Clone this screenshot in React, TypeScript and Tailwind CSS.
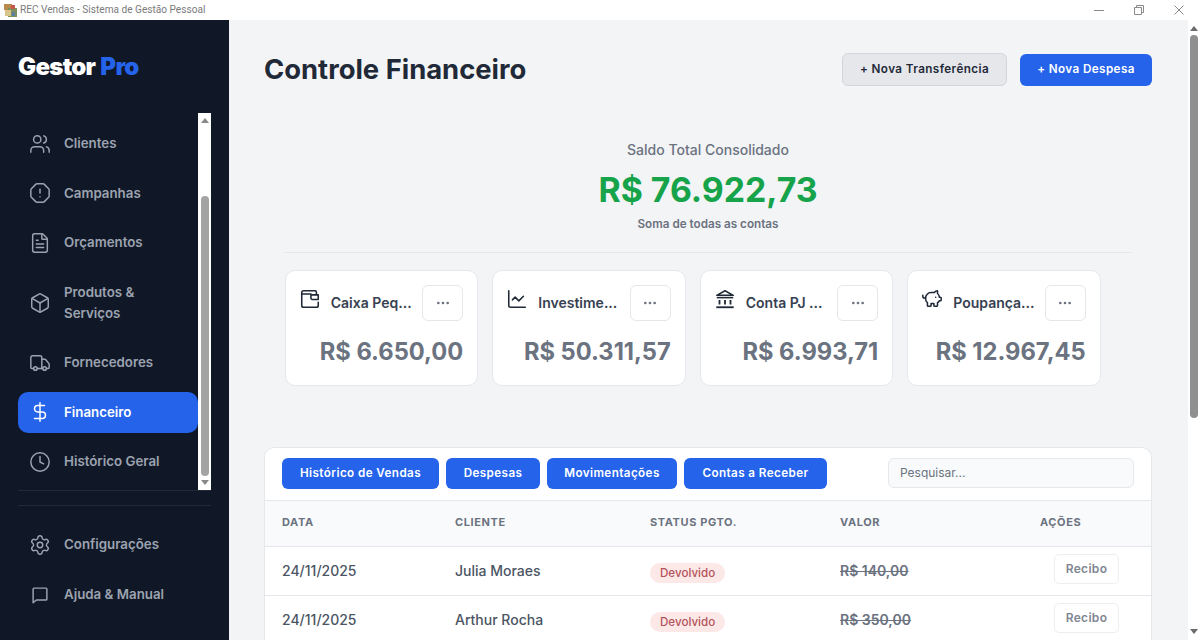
import React from "react";
import { Users, OctagonAlert, FileText, Box, Truck, DollarSign, Clock, Settings, ChartLine, PiggyBank, Ellipsis } from "lucide-react";

const font = { fontFamily: "Inter, 'Liberation Sans', sans-serif" };

function ChatBubble({ size = 22, strokeWidth = 1.6, className = "" }: any) {
  return (
    <svg width={size} height={size} viewBox="0 0 24 24" fill="none" stroke="currentColor" strokeWidth={strokeWidth} strokeLinejoin="round" className={className}>
      <path d="M5.5 4.5h13a1 1 0 0 1 1 1v11a1 1 0 0 1-1 1H8l-3.5 3V5.5a1 1 0 0 1 1-1z" />
    </svg>
  );
}

function WalletIcon({ size = 22, strokeWidth = 1.7, className = "" }: any) {
  return (
    <svg width={size} height={size} viewBox="0 0 24 24" fill="none" stroke="currentColor" strokeWidth={strokeWidth} strokeLinecap="round" strokeLinejoin="round" className={className}>
      <path d="M21 15.5V19a2 2 0 0 1-2 2H5a2 2 0 0 1-2-2V5a2 2 0 0 1 2-2h12.5A1.5 1.5 0 0 1 19 4.5V7" />
      <path d="M3 6.5h10" />
      <path d="M13 7.5h8v5h-6.5a1.5 1.5 0 0 1-1.5-1.5z" />
    </svg>
  );
}

function BankIcon({ size = 22, strokeWidth = 1.7, className = "" }: any) {
  return (
    <svg width={size} height={size} viewBox="0 0 24 24" fill="none" stroke="currentColor" strokeWidth={strokeWidth} className={className}>
      <path d="M12 3L21 8H3Z" strokeLinejoin="round" />
      <path d="M3 10.5H21" />
      <path d="M6 13V18M12 13V18M18 13V18" strokeWidth={2} />
      <path d="M2.5 21H21.5" strokeWidth={2} />
    </svg>
  );
}

function NavItem({ icon: Icon, label, active }: { icon: any; label: React.ReactNode; active?: boolean }) {
  return (
    <div className={`flex items-center gap-[13px] rounded-[10px] pl-[11px] pr-[8px] py-[10.25px] ${active ? "bg-[#2563eb] text-white" : "text-[#9ca3af]"}`}>
      <Icon size={22} strokeWidth={1.6} className="shrink-0 -my-[1px]" />
      <span className="text-[13.3px] leading-[21px] font-semibold">{label}</span>
    </div>
  );
}

function Arrow({ up, color = "#6b6b6b" }: { up?: boolean; color?: string }) {
  return (
    <svg width="8" height="5" viewBox="0 0 8 5" className="shrink-0">
      <path d={up ? "M4 0L8 5H0Z" : "M0 0H8L4 5Z"} fill={color} />
    </svg>
  );
}

function Card({ icon: Icon, name, value }: { icon: any; name: string; value: string }) {
  return (
    <div className="w-[193.5px] h-[116px] bg-white rounded-[10px] border border-[#e5e7eb] pl-[15px] pr-[14px] pt-[14px]">
      <div className="flex items-center justify-between">
        <div className="flex items-center gap-[10px] min-w-0">
          <Icon size={22} strokeWidth={1.7} className="shrink-0 text-[#1f2937] -mt-[9px] -ml-[2px]" />
          <span className="-mt-[2px] text-[14px] font-semibold text-[#374151] whitespace-nowrap">{name}</span>
        </div>
        <div className="w-[41px] h-[36px] shrink-0 flex items-center justify-center rounded-[6px] border border-[#e5e7eb] bg-white text-[#6b7280]">
          <Ellipsis size={16} />
        </div>
      </div>
      <div className="mt-[13px] text-right text-[23.7px] leading-[36px] font-bold text-[#6b7280]">{value}</div>
    </div>
  );
}

function Row({ date, client, value }: { date: string; client: string; value: string }) {
  return (
    <div className="grid grid-cols-[173px_195px_190px_200px_1fr] items-center pl-[17px] h-[49px] shrink-0 border-b border-[#e5e7eb]">
      <span className="-mt-[1px] text-[14px] font-medium text-[#4b5563]">{date}</span>
      <span className="-mt-[1px] text-[14px] font-medium text-[#4b5563]">{client}</span>
      <span><span className="inline-block rounded-full bg-[#fde8e8] text-[#b4535a] text-[11.6px] leading-[20px] font-medium px-[10px]">Devolvido</span></span>
      <span className="-mt-[1px] text-[14px] font-semibold text-[#6b7280] line-through">{value}</span>
      <span className="pl-[14px] -mt-[4px]"><span className="inline-flex items-center justify-center w-[65px] h-[30px] rounded-[5px] border border-[#eceef1] text-[12px] tracking-[0.3px] font-semibold text-[#7f8691]">Recibo</span></span>
    </div>
  );
}

export default function App() {
  return (
    <div className="w-[1200px] h-[640px] overflow-hidden flex flex-col bg-white" style={font}>
      <div className="h-[20px] shrink-0 bg-white flex items-center pl-[3px]">
        <svg width="15" height="15" viewBox="0 0 15 15" className="shrink-0">
          <rect x="1" y="1" width="8" height="6" fill="#b98a4e" />
          <rect x="5" y="5" width="9" height="9" fill="#7d8f5a" />
          <rect x="2" y="7" width="6" height="6" fill="#d9c48a" />
          <rect x="8" y="2" width="4" height="4" fill="#c7574a" />
          <rect x="9" y="9" width="3" height="4" fill="#5d7fa6" />
        </svg>
        <span className="ml-[2px] text-[10.1px] text-[#7b7b7b]" style={{ fontFamily: "Roboto, sans-serif" }}>REC Vendas - Sistema de Gestão Pessoal</span>
        <div className="ml-auto flex items-center gap-[30px] pr-[16px] text-[#8a8a8a]">
          <svg width="10" height="10" viewBox="0 0 10 10"><path d="M0 5.5H10" stroke="currentColor" /></svg>
          <svg width="10" height="10" viewBox="0 0 10 10" fill="none"><path d="M.5 2.5H7.5V9.5H.5ZM2.5 2.5V.5H9.5V7.5H7.5" stroke="currentColor" /></svg>
          <svg width="10" height="10" viewBox="0 0 10 10"><path d="M.5.5L9.5 9.5M9.5.5L.5 9.5" stroke="currentColor" /></svg>
        </div>
      </div>
      <div className="flex-1 flex min-h-0">
        <aside className="w-[229px] shrink-0 bg-[#101828] flex flex-col pl-[18px] pr-[18px]">
          <div className="h-[93px] shrink-0 flex items-start pt-[31px] text-[24px] leading-[32px] font-black text-white tracking-[-0.7px]">
            <span>Gestor</span><span className="ml-[5px] text-[#2563eb]">Pro</span>
          </div>
          <div className="h-[378px] shrink-0 flex border-b border-[#1f2937]">
            <nav className="flex-1 min-w-0 flex flex-col gap-[8px] pt-[10px]">
              <NavItem icon={Users} label="Clientes" />
              <NavItem icon={OctagonAlert} label="Campanhas" />
              <NavItem icon={FileText} label="Orçamentos" />
              <NavItem icon={Box} label={<>Produtos &<br />Serviços</>} />
              <NavItem icon={Truck} label="Fornecedores" />
              <NavItem icon={DollarSign} label="Financeiro" active />
              <NavItem icon={Clock} label="Histórico Geral" />
            </nav>
            <div className="w-[13px] shrink-0 bg-white flex flex-col items-center pt-[5px] pb-[5px]">
              <Arrow up color="#888" />
              <div className="h-[73px] shrink-0" />
              <div className="w-[8px] h-[280px] shrink-0 rounded-[4px] bg-[#a3a3a3]" />
              <div className="flex-1" />
              <Arrow color="#888" />
            </div>
          </div>
          <div className="mt-[14px] border-t border-[#1f2937] flex flex-col gap-[8.5px] pt-[18px]">
            <NavItem icon={Settings} label="Configurações" />
            <NavItem icon={ChatBubble} label="Ajuda & Manual" />
          </div>
        </aside>
        <main className="flex-1 min-w-0 bg-[#f3f4f6] overflow-hidden flex flex-col pl-[35px] pr-[36px]">
          <header className="flex items-center justify-between pt-[33px]">
            <h1 className="text-[27.4px] leading-[33px] font-bold text-[#1f2937]">Controle Financeiro</h1>
            <div className="flex items-center gap-[13px]">
              <div className="w-[165px] h-[33px] flex items-center justify-center rounded-[6px] border border-[#d1d5db] bg-[#e5e7eb] pt-[1px] text-[11.7px] font-semibold tracking-[0.4px] text-[#1f2937]">+ Nova Transferência</div>
              <div className="w-[132px] h-[32px] flex items-center justify-center rounded-[6px] bg-[#2563eb] pt-[1px] text-[11.7px] font-semibold tracking-[0.4px] text-white">+ Nova Despesa</div>
            </div>
          </header>
          <section className="mt-[54px] mx-[20px] flex flex-col items-center border-b border-[#e5e7eb] h-[113px] shrink-0">
            <div className="text-[14px] leading-[20px] font-medium text-[#6b7280]">Saldo Total Consolidado</div>
            <div className="mt-[8px] text-[33.8px] leading-[44px] font-bold text-[#16a34a]">R$ 76.922,73</div>
            <div className="mt-[2px] text-[11.7px] leading-[20px] font-semibold text-[#6b7280]">Soma de todas as contas</div>
          </section>
          <section className="mt-[17px] mx-[20.75px] flex gap-[14px]">
            <Card icon={WalletIcon} name="Caixa Peq..." value="R$ 6.650,00" />
            <Card icon={ChartLine} name="Investime..." value="R$ 50.311,57" />
            <Card icon={BankIcon} name="Conta PJ ..." value="R$ 6.993,71" />
            <Card icon={PiggyBank} name="Poupança..." value="R$ 12.967,45" />
          </section>
          <section className="mt-[61px] flex-1 bg-white rounded-t-[10px] border border-b-0 border-[#e5e7eb] flex flex-col overflow-hidden">
            <div className="h-[53px] shrink-0 flex items-center pl-[17px] pr-[17px] gap-[7px] pb-[2px] border-b border-[#e5e7eb]">
              {[["Histórico de Vendas", "w-[157px]"], ["Despesas", "w-[94px]"], ["Movimentações", "w-[130px]"], ["Contas a Receber", "w-[143px]"]].map(([t, w]) => (
                <div key={t} className={`${w} h-[31px] flex items-center justify-center rounded-[6px] bg-[#2563eb] pt-[1px] text-[11.7px] font-semibold tracking-[0.4px] text-white`}>{t}</div>
              ))}
              <div className="ml-auto w-[246px] h-[30px] flex items-center rounded-[6px] border border-[#e5e7eb] bg-[#f9fafb] pl-[11px] text-[12px] text-[#6b7280]">Pesquisar...</div>
            </div>
            <div className="grid grid-cols-[173px_195px_190px_200px_1fr] items-center pl-[17px] pb-[2px] h-[46px] shrink-0 bg-[#f9fafb] border-b border-[#e5e7eb] text-[11px] font-bold tracking-[0.6px] text-[#6b7280]">
              <span>DATA</span><span>CLIENTE</span><span>STATUS PGTO.</span><span>VALOR</span><span>AÇÕES</span>
            </div>
            <Row date="24/11/2025" client="Julia Moraes" value="R$ 140,00" />
            <Row date="24/11/2025" client="Arthur Rocha" value="R$ 350,00" />
          </section>
        </main>
        <div className="w-[12px] shrink-0 bg-white flex flex-col items-center pt-[6px] pb-[6px]">
          <Arrow up />
          <div className="h-[4px] shrink-0" />
          <div className="w-[8px] h-[383px] shrink-0 rounded-[4px] bg-[#8f8f8f]" />
          <div className="flex-1" />
          <Arrow />
        </div>
      </div>
    </div>
  );
}
